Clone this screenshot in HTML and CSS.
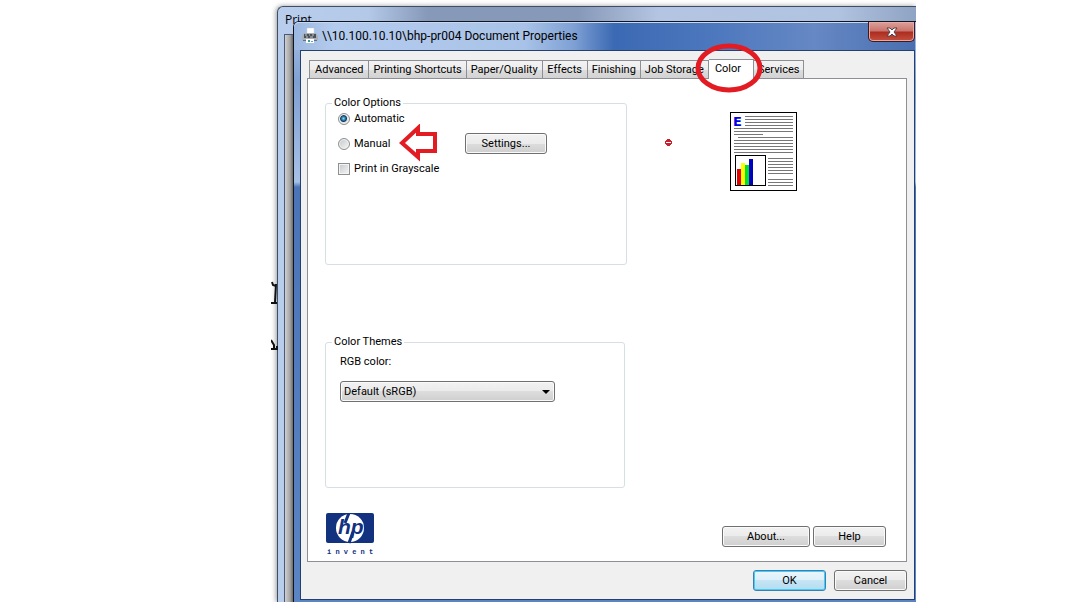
FILE: index.html
```
<!DOCTYPE html>
<html lang="en">
<head>
  <meta charset="UTF-8">
  <meta name="viewport" content="width=device-width, initial-scale=1.0">
  <title>Document Properties</title>
  <link rel="stylesheet" href="styles.css">
</head>
<body>
  <main class="desktop">
    <svg class="page-text" width="7" height="90" viewBox="0 0 7 90" aria-hidden="true">
      <path d="M0 23h6M1 2l1 3 3 1M5 4l-1 18M0 60l3 5v4M0 69h7M6 66v3" fill="none" stroke="#111" stroke-width="2"/>
    </svg>

    <section class="print-window">
      <div class="print-title">Print</div>
      <div class="print-body"></div>
    </section>

    <section class="dialog">
      <header class="titlebar">
        <svg class="printer" width="16" height="16" viewBox="0 0 16 16" aria-hidden="true">
          <path d="M5 0h7v6H5z" fill="#fff" stroke="#c8d4e4" stroke-width=".5"/>
          <path d="M2 5h12l2 3v4H0V8z" fill="#a9b0b8"/>
          <path d="M2 6h12v4H2z" fill="#4c5259"/>
          <path d="M3 7h2M7 7h1M10 7h2M4 9h2M8 9h3" stroke="#c5cad0"/>
          <path d="M1 12h14v1H1z" fill="#63717f"/>
          <path d="M4 11h8v4H4z" fill="#fff"/>
          <path d="M6 12h2v2H6z" fill="#3c9b92"/>
          <path d="M9 13h2v1H9z" fill="#65a4d0"/>
        </svg>
        <h1>\\10.100.10.10\bhp-pr004 Document Properties</h1>
        <button class="close" type="button" aria-label="Close">
          <svg width="12" height="10" viewBox="0 0 12 10" aria-hidden="true">
            <path d="M1 1h3l2 2 2-2h3L8 5l3 4H8L6 7 4 9H1l3-4z" fill="#fff" stroke="#50434b"/>
          </svg>
        </button>
      </header>

      <form class="client">
        <nav class="tabs" role="tablist">
          <button class="tab" type="button" role="tab">Advanced</button>
          <button class="tab" type="button" role="tab">Printing Shortcuts</button>
          <button class="tab" type="button" role="tab">Paper/Quality</button>
          <button class="tab" type="button" role="tab">Effects</button>
          <button class="tab" type="button" role="tab">Finishing</button>
          <button class="tab" type="button" role="tab">Job Storage</button>
          <button class="tab selected" type="button" role="tab" aria-selected="true">Color
            <svg class="circle" width="68" height="52" viewBox="0 0 68 52" aria-hidden="true">
              <ellipse cx="34" cy="26" rx="31" ry="22" fill="none" stroke="#e31b23" stroke-width="5"/>
            </svg>
          </button>
          <button class="tab" type="button" role="tab">Services</button>
        </nav>

        <div class="panel">
          <div class="top">
            <fieldset class="group options">
              <legend>Color Options</legend>
              <label class="choice"><input type="radio" name="mode" checked>Automatic</label>
              <div class="manual">
                <label class="choice"><input type="radio" name="mode">Manual</label>
                <svg class="arrow" width="40" height="38" viewBox="0 0 40 38" aria-hidden="true">
                  <path d="M3 19L19 4v6h17v17H19v6z" fill="#fff" stroke="#e31b23" stroke-width="4"/>
                </svg>
                <button class="btn settings" type="button">Settings...</button>
              </div>
              <label class="choice"><input type="checkbox" name="gray">Print in Grayscale</label>
            </fieldset>

            <svg class="marker" width="7" height="7" viewBox="0 0 7 7" aria-hidden="true">
              <path d="M2 0h3v1h1v1h1v3H6v1H5v1H2V6H1V5H0V2h1V1h1z" fill="#c8202c"/>
              <path d="M1 3h5v1H1z" fill="#fff"/>
            </svg>

            <svg class="preview" width="67" height="79" viewBox="0 0 67 79" aria-hidden="true">
              <rect x=".5" y=".5" width="66" height="78" fill="#fff" stroke="#000"/>
              <path d="M15 4.500h48M15 7.500h48M15 10.500h48M15 13.500h48M4 16.500h59M4 19.500h59M4 22.500h29M8 25.500h55M4 28.500h59M4 31.500h59M4 34.500h59M4 37.500h59M4 40.500h59M38 46.500h25M38 49.500h25M38 52.500h25M38 55.500h25M38 58.500h25M38 61.500h25M38 67.500h25M38 70.500h25M38 73.500h25" stroke="#777"/>
              <text x="3" y="14" class="preview-letter">E</text>
              <rect x="5.500" y="43.500" width="30" height="30" fill="#fff" stroke="#000"/>
              <path d="M7 57h4v16H7z" fill="#e00000"/>
              <path d="M11 51h4v22h-4z" fill="#ff0"/>
              <path d="M15 53h4v20h-4z" fill="#00e030"/>
              <path d="M19 47h4v26h-4z" fill="#0000c0"/>
            </svg>
          </div>

          <fieldset class="group themes">
            <legend>Color Themes</legend>
            <label for="rgb">RGB color:</label>
            <div class="combo">
              <select id="rgb">
                <option>Default (sRGB)</option>
              </select>
              <svg class="caret" width="8" height="4" viewBox="0 0 8 4" aria-hidden="true"><path d="M0 0h8L4 4z"/></svg>
            </div>
          </fieldset>

          <div class="bottom">
            <svg class="hp" width="50" height="42" viewBox="0 0 50 42" role="img" aria-label="hp invent">
              <rect x="1" y="0" width="48" height="30" rx="2" fill="#12317f"/>
              <circle cx="25" cy="15" r="14" fill="#fff"/>
              <path d="M24 0L20 10M28 19L24 30" stroke="#12317f" stroke-width="3"/>
              <text x="13" y="21" class="hp-letters">hp</text>
              <text x="2" y="41" class="hp-invent">i n v e n t</text>
            </svg>
            <div class="actions">
              <button class="btn about" type="button">About...</button>
              <button class="btn" type="button">Help</button>
            </div>
          </div>
        </div>

        <footer class="footer">
          <button class="btn default" type="submit">OK</button>
          <button class="btn" type="button">Cancel</button>
        </footer>
      </form>
    </section>
  </main>
</body>
</html>
```
FILE: styles.css
```
* {
  box-sizing: border-box;
}

body {
  margin: 0;
  background: #fff;
  color: #000;
  font-family: Roboto, Arial, sans-serif;
  font-size: 11px;
  line-height: 14px;
  display: grid;
  grid-template-columns: 271fr 645fr 172fr;
}

button,
select {
  font: inherit;
  color: inherit;
}

.desktop {
  grid-column: 2;
  display: grid;
  min-height: 100vh;
  padding-top: 6px;
  overflow: hidden;
  position: relative;
}

.page-text {
  position: absolute;
  left: 0;
  top: 280px;
}

/* window behind the dialog */
.print-window {
  grid-area: 1 / 1;
  margin-left: 6px;
  border-left: 1px solid #3f4d66;
  border-top: 1px solid #3f4d66;
  border-top-left-radius: 6px;
  background: linear-gradient(90deg, #b9cdec 0, #b4c8e8 90px, #8699b9 150px, #8799b8 300px, #b3c5e2 380px, #b0c3e1 560px, #8fa3c2);
  box-shadow: -1px 0 5px #999;
  display: flex;
  flex-direction: column;
}

.print-title {
  padding: 6px 7px;
  height: 27px;
  font-family: "Open Sans", sans-serif;
  font-size: 12px;
}

.print-body {
  flex: 1;
  margin-left: 6px;
  border-left: 1px solid #4a5a76;
  border-top: 1px solid #4a5a76;
  background: linear-gradient(90deg, #d0d0d0, #a5a5a5 5px, #555 9px);
}

.dialog {
  grid-area: 1 / 1;
  margin: 15px 0 0 22px;
  padding: 0 1px 2px 6px;
  border-left: 1px solid #10151f;
  border-top: 1px solid #10151f;
  border-top-left-radius: 6px;
  background: linear-gradient(#a9c1e6, #7fa0d3 60px, #a7c0e6 160px, #4b74b8 165px, #5b84c4);
  display: flex;
  flex-direction: column;
  z-index: 1;
}

.titlebar {
  display: flex;
  align-items: center;
  height: 28px;
  margin-left: -6px;
  padding-left: 8px;
  border-top-left-radius: 5px;
  background: linear-gradient(90deg, #9db8e0 0, #b3cbed 40px, #a9c3e8 230px, #7ea0d4 280px, #3b69b3 320px, #4d78be 420px, #6688c4 520px, #4a6fb0);
  box-shadow: inset 0 1px #c8d8f0;
}

.titlebar h1 {
  flex: 1;
  margin: 0;
  padding-left: 4px;
  font-family: Roboto, sans-serif;
  font-size: 12px;
  font-weight: 400;
}

.close {
  align-self: flex-start;
  display: flex;
  align-items: center;
  justify-content: center;
  width: 47px;
  height: 20px;
  padding: 0;
  border: 1px solid #401820;
  border-top: 0;
  border-radius: 0 0 5px 5px;
  background: linear-gradient(#dba09a, #c9746c 9px, #ac2c20 10px, #c4503f);
  box-shadow: inset 0 0 0 1px #e6aaa4;
}

.client {
  flex: 1;
  display: flex;
  flex-direction: column;
  padding: 8px 7px 8px 6px;
  border: 1px solid #23406f;
  background: #f0f0f0;
}

.tabs {
  display: flex;
  align-items: flex-end;
  padding-left: 2px;
}

.tab {
  min-width: 45px;
  height: 18px;
  padding: 1px 4px 0;
  border: 1px solid #8e8f94;
  border-width: 1px 1px 0 0;
  background: linear-gradient(#f3f3f3, #ececec 50%, #dedede 50%, #d2d2d2);
  white-space: nowrap;
}

.tab:first-child {
  padding: 1px 5px 0;
  border-left-width: 1px;
}

.tab.selected {
  position: relative;
  z-index: 1;
  height: 20px;
  margin-bottom: -1px;
  padding: 0 12px 2px 6px;
  background: #fff;
}

.circle {
  position: absolute;
  left: -14px;
  top: -18px;
}

.panel {
  flex: 1;
  padding: 17px 20px 6px 17px;
  border: 1px solid #8e8f94;
  background: #fff;
}

.top {
  display: flex;
  align-items: flex-start;
}

.group {
  margin: 0;
  padding: 0 12px;
  border: 1px solid #d5dfe5;
  border-radius: 3px;
}

.group legend {
  margin-left: -6px;
  padding: 0 2px;
}

.options {
  width: 302px;
  height: 169px;
}

.themes {
  width: 300px;
  height: 153px;
  margin-top: 70px;
  padding: 6px 14px;
}

.themes legend {
  margin-left: -8px;
}

.choice {
  display: flex;
  align-items: center;
  gap: 4px;
}

.options > .choice {
  margin-top: 2px;
}

.manual {
  position: relative;
  display: flex;
  align-items: center;
  justify-content: space-between;
  margin: 7px 67px 8px 0;
}

.arrow {
  position: absolute;
  left: 61px;
  top: -9px;
}

.choice input {
  appearance: none;
  width: 12px;
  height: 12px;
  margin: 0;
  border: 1px solid #8e8f8f;
  background: linear-gradient(135deg, #c4c8cc, #f6f6f6);
  box-shadow: inset 0 0 0 1px #f4f4f4;
}

.choice input[type="radio"] {
  border-radius: 50%;
}

.choice input[type="radio"]:checked {
  background: radial-gradient(circle at 45% 45%, #8fd8f2 0, #2474a0 2px, #123a5c 3px, #dde3e8 4px);
}

.btn {
  width: 73px;
  height: 21px;
  padding: 0;
  border: 1px solid #707070;
  border-radius: 3px;
  background: linear-gradient(#f2f2f2, #ebebeb 50%, #dddddd 50%, #cfcfcf);
  box-shadow: inset 0 0 0 1px #fafafa;
}

.settings {
  width: 82px;
}

.about {
  width: 88px;
}

.default {
  border-color: #3c7fb1;
  background: linear-gradient(#eaf5fb, #dcf0fa 50%, #c6e5f5 50%, #b4dcf0);
  box-shadow: inset 0 0 0 1px #45cdf5;
}

.marker {
  margin: 43px 0 0 38px;
}

.preview {
  margin: 16px 0 0 58px;
}

.preview-letter {
  font: bold 13px "DejaVu Sans", sans-serif;
  fill: #0000e0;
}

.themes label {
  display: block;
  margin-bottom: 12px;
}

.combo {
  position: relative;
  width: 215px;
}

.combo select {
  appearance: none;
  display: block;
  width: 100%;
  height: 21px;
  padding: 0 3px;
  border: 1px solid #707070;
  border-radius: 3px;
  background: linear-gradient(#f2f2f2, #ebebeb 50%, #dddddd 50%, #cfcfcf);
  box-shadow: inset 0 0 0 1px #fafafa;
}

.caret {
  position: absolute;
  right: 5px;
  top: 9px;
}

.bottom {
  display: flex;
  align-items: flex-end;
  justify-content: space-between;
  margin-top: 25px;
}

.hp-letters {
  font: italic bold 21px "Liberation Sans", Arial, sans-serif;
  fill: #12317f;
}

.hp-invent {
  font: bold 7px "Liberation Mono", monospace;
  fill: #12317f;
}

.actions {
  display: flex;
  gap: 3px;
  margin-bottom: 8px;
}

.footer {
  display: flex;
  justify-content: flex-end;
  gap: 8px;
  margin-top: 8px;
}
```
